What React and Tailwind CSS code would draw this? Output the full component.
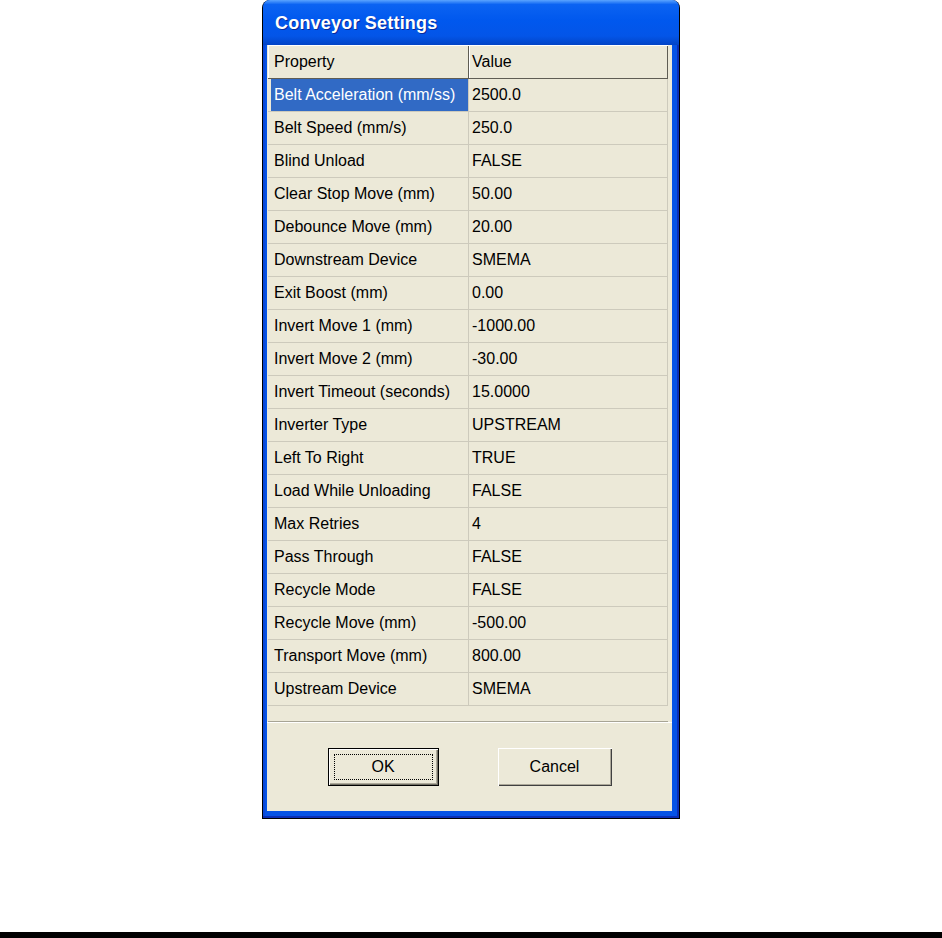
const rows = [
  ['Belt Acceleration (mm/ss)', '2500.0'],
  ['Belt Speed (mm/s)', '250.0'],
  ['Blind Unload', 'FALSE'],
  ['Clear Stop Move (mm)', '50.00'],
  ['Debounce Move (mm)', '20.00'],
  ['Downstream Device', 'SMEMA'],
  ['Exit Boost (mm)', '0.00'],
  ['Invert Move 1 (mm)', '-1000.00'],
  ['Invert Move 2 (mm)', '-30.00'],
  ['Invert Timeout (seconds)', '15.0000'],
  ['Inverter Type', 'UPSTREAM'],
  ['Left To Right', 'TRUE'],
  ['Load While Unloading', 'FALSE'],
  ['Max Retries', '4'],
  ['Pass Through', 'FALSE'],
  ['Recycle Mode', 'FALSE'],
  ['Recycle Move (mm)', '-500.00'],
  ['Transport Move (mm)', '800.00'],
  ['Upstream Device', 'SMEMA'],
]

const font = { fontFamily: '"Liberation Sans", Arial, sans-serif' }

const App = () => {
  return (
    <div className="w-[942px] h-[938px] bg-white flex flex-col" style={font}>
      {/* Dialog window */}
      <div className="ml-[262px] w-[418px] h-[819px] flex flex-col rounded-t-[8px] bg-[#0553e6] border-x border-b border-black shadow-[inset_-2px_-2px_0_#0a2fb8,inset_2px_0_0_#0a48d8]">
        {/* Title bar */}
        <div className="h-[45px] flex items-center pl-[12px] rounded-t-[7px] bg-[linear-gradient(to_bottom,#5aa4ff_0%,#0b63f2_10%,#0058ee_45%,#0355e8_80%,#0244c6_100%)]">
          <span className="text-white font-bold text-[18px] tracking-[0.2px] [text-shadow:1px_1px_0_#0a2a9a] mt-[2px]">
            Conveyor Settings
          </span>
        </div>

        {/* Client area */}
        <div className="flex-1 ml-[4px] mr-[7px] mb-[7px] bg-[#ece9d8] flex flex-col text-[16px] text-black">
          {/* Property grid */}
          <div className="ml-px w-[400px] h-[677px] flex flex-col border-b border-[#a7a495]">
            <div className="h-[34px] flex border-t border-white border-b border-b-[#5f5d54]">
              <div className="w-[201px] h-full flex items-center pl-[5px] border-l border-white border-r border-r-[#5f5d54]">
                Property
              </div>
              <div className="w-[199px] h-full flex items-center pl-[2px] border-l border-white border-r border-r-[#5f5d54]">
                Value
              </div>
            </div>
            {rows.map(([name, value], i) => (
              <div key={name} className="h-[33px] flex border-b border-[#cdcabc]">
                <div className="w-[3px]" />
                <div
                  className={`w-[198px] h-full flex items-center pl-[3px] border-r border-[#cdcabc] whitespace-nowrap ${
                    i === 0 ? 'bg-[#316ac5] text-white' : ''
                  }`}
                >
                  {name}
                </div>
                <div className="w-[199px] h-full flex items-center pl-[3px] border-r border-[#cdcabc]">
                  {value}
                </div>
              </div>
            ))}
          </div>

          {/* Buttons */}
          <div className="flex-1 border-t border-white flex justify-center gap-[59px] pt-[25px]">
            <button className="w-[111px] h-[38px] border border-black bg-[#ece9d8] shadow-[inset_1px_1px_0_#fff,inset_-1px_-1px_0_#716f64,inset_-2px_-2px_0_#aca899] flex items-center justify-center p-[5px]">
              <span className="w-full h-full border border-dotted border-black flex items-center justify-center">
                OK
              </span>
            </button>
            <button className="w-[114px] h-[38px] bg-[#ece9d8] shadow-[inset_1px_1px_0_#fff,inset_-1px_-1px_0_#404040,inset_-2px_-2px_0_#aca899] flex items-center justify-center">
              Cancel
            </button>
          </div>
        </div>
      </div>

      <div className="flex-1" />
      <div className="h-[6px] bg-black" />
    </div>
  )
}

export default App
